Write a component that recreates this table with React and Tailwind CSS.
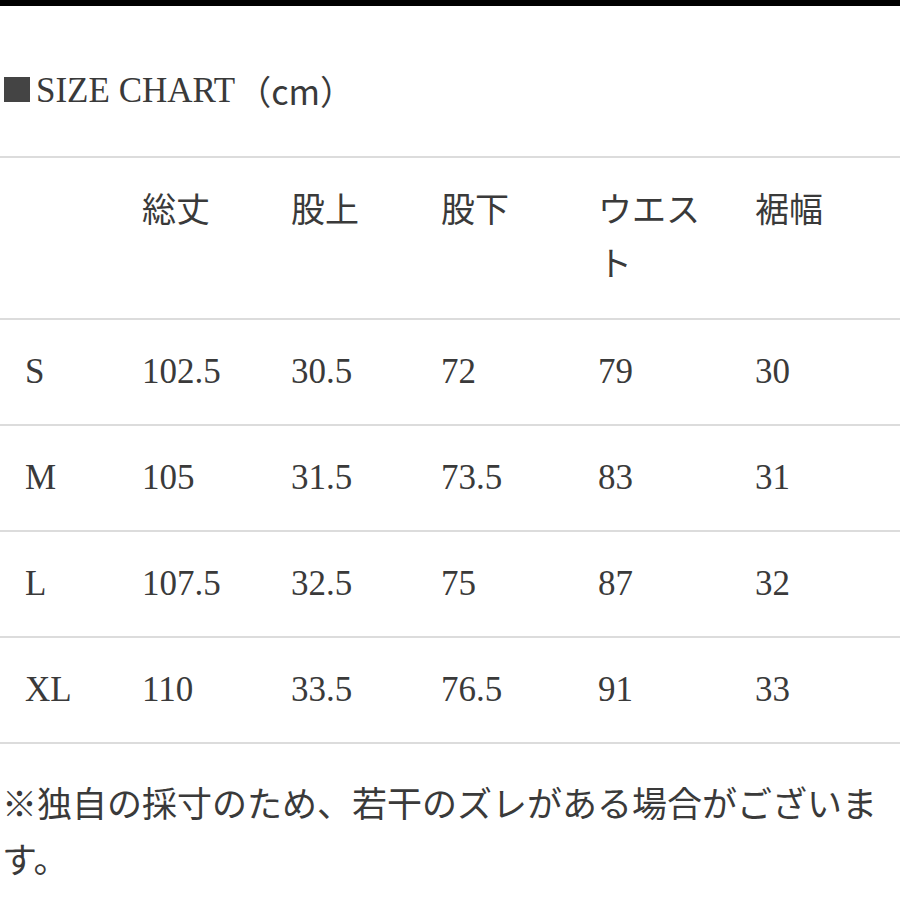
import React from 'react';

const headers = ['', '総丈', '股上', '股下', 'ウエスト', '裾幅'];

const rows = [
  ['S', '102.5', '30.5', '72', '79', '30'],
  ['M', '105', '31.5', '73.5', '83', '31'],
  ['L', '107.5', '32.5', '75', '87', '32'],
  ['XL', '110', '33.5', '76.5', '91', '33'],
];

const font = "font-['Liberation_Serif','Noto_Sans_CJK_JP',serif]";
const cols = 'grid grid-cols-[117px_149px_150px_157px_157px_1fr]';

const App = () => {
  return (
    <div className={`w-[900px] h-[900px] bg-white text-[#3a3a3a] overflow-hidden ${font}`}>
      {/* top bar */}
      <div className='h-[6px] bg-black' />

      {/* title */}
      <div className='mt-[60px] mb-[40px] h-[50px] flex items-center pl-[4px] text-[35px] leading-[50px]'>
        <span className='inline-block w-[26px] h-[25px] bg-[#444] mr-[6px] mt-[-4px]' />
        <span>SIZE CHART</span>
        <span className="font-['Noto_Sans_CJK_JP',sans-serif] ml-[2px] text-[34px]">（cm）</span>
      </div>

      {/* table */}
      <div className='border-t-2 border-[#dcdcdc]'>
        <div className={`${cols} h-[162px] border-b-2 border-[#dcdcdc] text-[34px] leading-[54px] pt-[23px] font-['Noto_Sans_CJK_JP',sans-serif]`}>
          {headers.map((h, i) => (
            <div key={i} className='pl-[25px] pr-[4px]'>{h}</div>
          ))}
        </div>
        {rows.map((r) => (
          <div key={r[0]} className={`${cols} h-[106px] border-b-2 border-[#dcdcdc] items-center text-[35px]`}>
            {r.map((c, i) => (
              <div key={i} className='pl-[25px]'>{c}</div>
            ))}
          </div>
        ))}
      </div>

      {/* note */}
      <p className="mt-[30px] pl-[2px] text-[35px] leading-[56px] font-['Noto_Sans_CJK_JP',sans-serif]">
        ※独自の採寸のため、若干のズレがある場合がございます。
      </p>
    </div>
  );
};

export default App;
